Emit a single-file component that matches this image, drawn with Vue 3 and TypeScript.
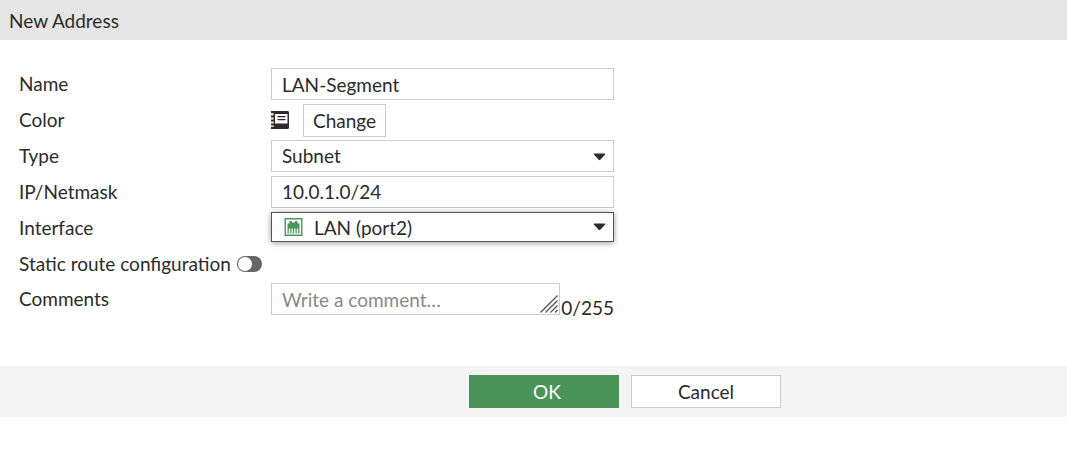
<script setup lang="ts">
import { computed, ref } from 'vue'

const maxComment = 255
const name = ref('LAN-Segment')
const type = ref('Subnet')
const netmask = ref('10.0.1.0/24')
const iface = ref('LAN (port2)')
const staticRoute = ref(false)
const comment = ref('')
const counter = computed(() => `${comment.value.length}/${maxComment}`)
</script>

<template>
  <div class="page">
    <header class="title-bar"><h1>New Address</h1></header>

    <form id="address-form" class="form" @submit.prevent>
      <div class="row">
        <label for="name">Name</label>
        <input id="name" v-model="name" class="box" type="text" />
      </div>

      <div class="row">
        <span id="color-label" class="label">Color</span>
        <div class="color">
          <svg class="book" viewBox="0 0 19 20" aria-hidden="true">
            <path fill="#2b2b2b" d="M2.500 1h14q1.500 0 1.500 1.500v15q0 1.500-1.500 1.500h-14z" />
            <path fill="#fff" d="M4 4h12.500v9.500H4z" />
            <path stroke="#2b2b2b" stroke-width="1.300" d="M6.500 6.700h8M6.500 9.700h8" />
            <path stroke="#2b2b2b" stroke-width="2" d="M0 2h3M0 6.500h3M0 10.500h3M0 14.500h3M0 18h3" />
            <path stroke="#d8c9a8" stroke-width="1.500" d="M0 4.300h2.500M0 8.500h2.500M0 12.500h2.500M0 16.300h2.500" />
          </svg>
          <button type="button" class="change" aria-describedby="color-label">Change</button>
        </div>
      </div>

      <div class="row">
        <label for="type">Type</label>
        <div class="select">
          <select id="type" v-model="type" class="box">
            <option>Subnet</option>
          </select>
          <svg class="caret" viewBox="0 0 12 8" aria-hidden="true"><path fill="#2b2b2b" d="M.8.500h10.400q1 0 .4.900L6.800 6.800q-.8.700-1.600 0L.4 1.400Q-.2.500.8.500z" /></svg>
        </div>
      </div>

      <div class="row">
        <label for="netmask">IP/Netmask</label>
        <input id="netmask" v-model="netmask" class="box netmask" type="text" />
      </div>

      <div class="row">
        <label for="iface">Interface</label>
        <div class="select active">
          <select id="iface" v-model="iface" class="box">
            <option>LAN (port2)</option>
          </select>
          <svg class="port" viewBox="0 0 18 18" aria-hidden="true">
            <path fill="none" stroke="#4a9459" stroke-width="1.400" d="M.7.700h16.600v16.600H.7z" />
            <path fill="#4a9459" d="M3 15.500V5.500h2V3h2.500v1.500h3V3H13v2.500h2v10h-1.300v-5h-1.400v5H11v-5H9.700v5H8.300v-5H7v5H5.700v-5H4.300v5z" />
          </svg>
          <svg class="caret" viewBox="0 0 12 8" aria-hidden="true"><path fill="#2b2b2b" d="M.8.500h10.400q1 0 .4.900L6.800 6.800q-.8.700-1.600 0L.4 1.400Q-.2.500.8.500z" /></svg>
        </div>
      </div>

      <div class="toggle-row">
        <label for="static-route">Static route configuration</label>
        <input id="static-route" v-model="staticRoute" class="toggle" type="checkbox" role="switch" />
      </div>

      <div class="row">
        <label for="comments">Comments</label>
        <div class="comment">
          <div class="comment-box">
            <textarea id="comments" v-model="comment" class="box" rows="1" :maxlength="maxComment" placeholder="Write a comment…"></textarea>
            <svg class="grip" viewBox="0 0 18 18" aria-hidden="true">
              <path fill="none" stroke="#555" stroke-width="1.300" d="M.5 17.500l17-17M5.500 17.500l12-12M10.500 17.500l7-7M15 17.500l2.500-2.500" />
            </svg>
          </div>
          <span class="counter">{{ counter }}</span>
        </div>
      </div>
    </form>

    <footer class="actions">
      <button type="submit" form="address-form" class="ok">OK</button>
      <button type="button">Cancel</button>
    </footer>
  </div>
</template>

<style>
body {
  margin: 0;
  background: #fff;
}
</style>

<style scoped>
.page,
.page input,
.page select,
.page textarea,
.page button {
  font-family: Lato, "Liberation Sans", sans-serif;
  font-size: 19px;
  line-height: 24px;
  color: #2b2b2b;
}

.page * {
  box-sizing: border-box;
}

.title-bar {
  padding: 9px 9px 7px;
  background: #e5e5e5;
}

h1 {
  margin: 0;
  font-size: 19px;
  font-weight: 400;
  line-height: 24px;
}

.form {
  display: flex;
  flex-direction: column;
  gap: 4px;
  max-width: 633px;
  padding: 28px 19px 51px;
}

.row {
  display: grid;
  grid-template-columns: 252px minmax(0, 1fr);
  align-items: start;
}

label,
.label {
  padding: 4px 0;
}

.box {
  display: block;
  width: 100%;
  height: 32px;
  margin: 0;
  padding: 0 10px;
  border: 1px solid #ccc;
  border-radius: 0;
  outline: none;
  background: #fff;
  appearance: none;
}

.page .netmask {
  padding-bottom: 2px;
}

.color {
  display: flex;
  align-items: center;
  gap: 13px;
}

.book {
  width: 19px;
  height: 20px;
}

.page button {
  height: 33px;
  padding: 0 9px;
  border: 1px solid #ccc;
  border-radius: 0;
  background: #fff;
  cursor: pointer;
}

.color .change {
  margin-bottom: -1px;
}

.select {
  position: relative;
}

.select .box {
  padding: 0 30px 0 10px;
}

.select.active .box {
  height: 30px;
  padding: 2px 30px 0 42px;
  border-color: #555;
  box-shadow: 0 1px 6px rgba(0, 0, 0, 0.4);
}

.caret {
  position: absolute;
  top: 13px;
  right: 8px;
  width: 13px;
  height: 8px;
  pointer-events: none;
}

.active .caret {
  top: 11px;
}

.port {
  position: absolute;
  top: 6px;
  left: 13px;
  width: 19px;
  height: 18px;
  pointer-events: none;
}

.toggle-row {
  display: flex;
  align-items: center;
  gap: 6px;
  height: 31px;
}

.toggle {
  display: flex;
  width: 25px;
  height: 16px;
  margin: 0;
  padding: 1px;
  border-radius: 8px;
  background: #666;
  appearance: none;
}

.toggle::before {
  content: "";
  width: 14px;
  height: 14px;
  border-radius: 50%;
  background: #fff;
}

.toggle:checked {
  justify-content: flex-end;
  background: #4a9459;
}

.comment {
  display: flex;
  align-items: flex-end;
  gap: 1px;
}

.comment-box {
  position: relative;
  flex: 1;
}

.comment-box .box {
  padding-top: 4px;
  overflow: hidden;
  resize: none;
}

.comment-box .box::placeholder {
  color: #888;
  opacity: 1;
}

.grip {
  position: absolute;
  right: 2px;
  bottom: 2px;
  width: 18px;
  height: 18px;
  pointer-events: none;
}

.counter {
  margin-bottom: -5px;
}

.actions {
  display: flex;
  justify-content: center;
  gap: 12px;
  padding: 9px 0 9px 183px;
  background: #f4f4f4;
}

.page .actions button {
  width: 150px;
}

.page .actions .ok {
  padding-left: 15px;
  border-color: #4a9459;
  background: #4a9459;
  color: #fff;
}
</style>
